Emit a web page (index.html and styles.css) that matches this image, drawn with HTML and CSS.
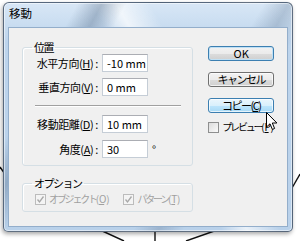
FILE: index.html
```html
<!DOCTYPE html>
<html lang="ja">
<head>
    <meta charset="UTF-8">
    <meta name="viewport" content="width=device-width, initial-scale=1.0">
    <title>移動</title>
    <link rel="stylesheet" href="styles.css">
</head>
<body>

<!-- the drawing behind the dialog -->
<svg class="backdrop" width="300" height="241" viewBox="0 0 300 241">
    <g stroke="#111" stroke-width="1.4" fill="none">
        <line x1="0" y1="167" x2="7" y2="177"/>
        <line x1="98" y1="229" x2="124" y2="241"/>
        <line x1="155" y1="229" x2="155" y2="241"/>
        <line x1="186" y1="241" x2="220" y2="229"/>
        <line x1="292" y1="188" x2="300" y2="174"/>
    </g>
</svg>

<div class="window">
    <div class="titlebar">移動</div>
    <div class="client">
        <div class="left">
            <fieldset class="group">
                <legend>位置</legend>
                <div class="row"><label>水平方向(<u>H</u>) :</label><span class="input">-10 mm</span></div>
                <div class="row"><label>垂直方向(<u>V</u>) :</label><span class="input">0 mm</span></div>
                <hr class="sep">
                <div class="row"><label>移動距離(<u>D</u>) :</label><span class="input">10 mm</span></div>
                <div class="row"><label>角度(<u>A</u>) :</label><span class="input">30</span><span class="unit">°</span></div>
            </fieldset>
            <fieldset class="group options">
                <legend>オプション</legend>
                <div class="checks">
                    <span class="check disabled"><span class="box checked"></span>オブジェクト(<u>O</u>)</span>
                    <span class="check disabled"><span class="box checked"></span>パターン(<u>T</u>)</span>
                </div>
            </fieldset>
        </div>
        <div class="buttons">
            <button class="btn default">OK</button>
            <button class="btn">キャンセル</button>
            <button class="btn hover">コピー(<u>C</u>)</button>
            <span class="check"><span class="box"></span>プレビュー(<u>P</u>)</span>
        </div>
    </div>
</div>

<svg class="cursor" width="13" height="19" viewBox="0 0 13 19">
    <path d="M0.5 0.5 L0.5 15 L4 11.8 L6.4 17.4 L8.6 16.5 L6.3 11 L10.9 11 Z" fill="#fff" stroke="#000" stroke-width="1" stroke-linejoin="round"/>
</svg>

</body>
</html>
```

FILE: styles.css
```css
* {
    box-sizing: border-box;
}
body {
    margin: 0;
    width: 300px;
    height: 241px;
    overflow: hidden;
    position: relative;
    background-color: #fff;
    font-family: "Noto Sans CJK JP", sans-serif;
    font-size: 11px;
    color: #000;
}
u {
    text-decoration: underline;
    text-underline-offset: 1px;
}
.backdrop {
    position: absolute;
    left: 0;
    top: 0;
}
.window {
    position: relative;
    margin: 2px 0 0 3px;
    width: 290px;
    height: 230px;
    padding: 0 4px 4px;
    border: 1px solid rgba(45, 60, 80, 0.7);
    border-radius: 6px 6px 5px 5px;
    background:
        linear-gradient(118deg, transparent 18%, rgba(70, 95, 125, 0.35) 24%, transparent 30%),
        linear-gradient(60deg, transparent 52%, rgba(255, 255, 255, 0.7) 58%, transparent 66%),
        linear-gradient(120deg, transparent 62%, rgba(70, 95, 125, 0.25) 68%, transparent 74%),
        linear-gradient(#d8e7f6, #bdd4ec 40px, #b9d1ea);
    box-shadow: -1px 2px 4px rgba(0, 0, 0, 0.35), inset 0 0 0 1px rgba(255, 255, 255, 0.5);
    display: flex;
    flex-direction: column;
}
.titlebar {
    height: 24px;
    line-height: 21px;
    padding-left: 1px;
    font-size: 11.5px;
    color: #000;
}
.client {
    flex: 1;
    display: flex;
    padding: 12px 13px 0 13px;
    background-color: #f0f0f0;
    border: 1px solid #93aecb;
}
.left {
    width: 172px;
}
.group {
    margin: 0;
    padding: 0 11px 7px 12px;
    border: 1px solid #d5dfe5;
    border-radius: 3px;
    box-shadow: inset 1px 1px 0 #fff;
}
.group legend {
    margin-left: -3px;
    padding: 0 2px;
    line-height: 14px;
    letter-spacing: -1.5px;
}
.row {
    display: flex;
    align-items: center;
    height: 18px;
    margin-bottom: 6px;
}
.row:last-child {
    margin-bottom: 0;
}
.sep + .row {
    margin-bottom: 7px;
}
.row label {
    width: 63px;
    flex-shrink: 0;
    text-align: right;
    white-space: nowrap;
    letter-spacing: -0.4px;
}
.input {
    width: 46px;
    height: 18px;
    margin-left: 4px;
    flex-shrink: 0;
    padding-left: 4px;
    line-height: 16px;
    background-color: #fff;
    border: 1px solid #c5cdd6;
    border-top-color: #abadb3;
    white-space: nowrap;
}
.unit {
    margin-left: 4px;
    align-self: flex-start;
    margin-top: 3px;
    line-height: 12px;
}
.sep {
    margin: 9px 0 8px;
    border: 0;
    border-top: 1px solid #a0a0a0;
    border-bottom: 1px solid #fff;
}
.options {
    margin-top: 10px;
    padding-bottom: 5px;
}
.checks {
    display: flex;
    gap: 16px;
    padding-top: 2px;
}
.check {
    display: flex;
    align-items: center;
    gap: 2px;
    font-size: 10px;
    line-height: 14px;
    white-space: nowrap;
    letter-spacing: -2.2px;
}
.check.disabled {
    color: #a0a0a0;
}
.box {
    width: 11px;
    height: 11px;
    margin-right: 1px;
    flex-shrink: 0;
    border: 1px solid #8e8f8f;
    background: linear-gradient(135deg, #dcdcdc, #fafafa);
}
.disabled .box {
    border-color: #bcbcbc;
    background: #f4f4f4;
}
.box.checked {
    background:
        url("data:image/svg+xml,%3Csvg xmlns='http://www.w3.org/2000/svg' width='9' height='9'%3E%3Cpath d='M1.5 4.5 L3.5 7 L7.5 1.5' fill='none' stroke='%23a8a8a8' stroke-width='1.3'/%3E%3C/svg%3E") center no-repeat,
        #f4f4f4;
}
.buttons {
    width: 66px;
    margin-left: 15px;
    padding-top: 6px;
    display: flex;
    flex-direction: column;
}
.btn {
    height: 15px;
    margin: 0 0 11px;
    padding: 0;
    font-family: inherit;
    font-size: 11px;
    line-height: 13px;
    letter-spacing: -1.5px;
    color: #000;
    border: 1px solid #707070;
    border-radius: 3px;
    background: linear-gradient(#f2f2f2 0%, #ebebeb 50%, #dddddd 50%, #cfcfcf 100%);
    box-shadow: inset 0 0 0 1px rgba(255, 255, 255, 0.7);
}
.btn.default {
    letter-spacing: 0;
    border-color: #3c7fb1;
    box-shadow: inset 0 0 0 1px #bfe0f5;
}
.btn.hover {
    margin-bottom: 7px;
    border-color: #3c7fb1;
    background: linear-gradient(#eaf6fd 0%, #d9f0fc 50%, #bee6fd 50%, #a7d9f5 100%);
}
.cursor {
    position: absolute;
    left: 266px;
    top: 112px;
}
```
